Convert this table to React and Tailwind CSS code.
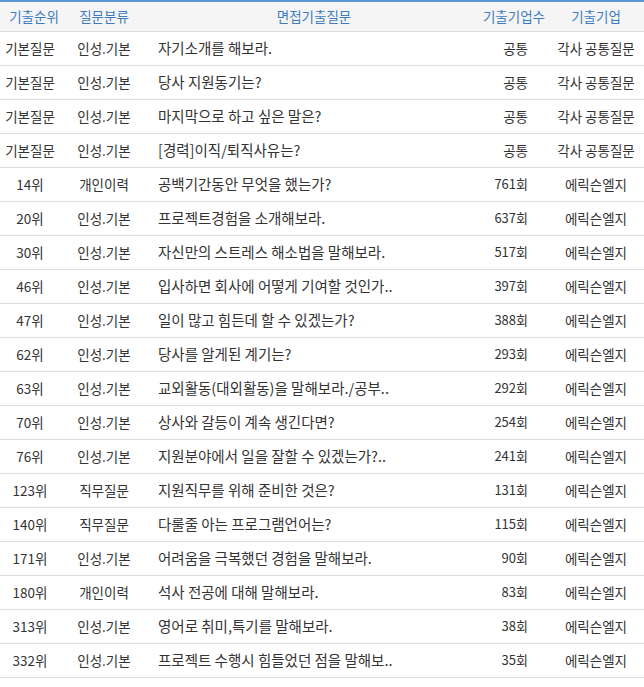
import React from "react";

const rows = [
  ["기본질문", "인성.기본", "자기소개를 해보라.", "공통", "각사 공통질문"],
  ["기본질문", "인성.기본", "당사 지원동기는?", "공통", "각사 공통질문"],
  ["기본질문", "인성.기본", "마지막으로 하고 싶은 말은?", "공통", "각사 공통질문"],
  ["기본질문", "인성.기본", "[경력]이직/퇴직사유는?", "공통", "각사 공통질문"],
  ["14위", "개인이력", "공백기간동안 무엇을 했는가?", "761회", "에릭슨엘지"],
  ["20위", "인성.기본", "프로젝트경험을 소개해보라.", "637회", "에릭슨엘지"],
  ["30위", "인성.기본", "자신만의 스트레스 해소법을 말해보라.", "517회", "에릭슨엘지"],
  ["46위", "인성.기본", "입사하면 회사에 어떻게 기여할 것인가..", "397회", "에릭슨엘지"],
  ["47위", "인성.기본", "일이 많고 힘든데 할 수 있겠는가?", "388회", "에릭슨엘지"],
  ["62위", "인성.기본", "당사를 알게된 계기는?", "293회", "에릭슨엘지"],
  ["63위", "인성.기본", "교외활동(대외활동)을 말해보라./공부..", "292회", "에릭슨엘지"],
  ["70위", "인성.기본", "상사와 갈등이 계속 생긴다면?", "254회", "에릭슨엘지"],
  ["76위", "인성.기본", "지원분야에서 일을 잘할 수 있겠는가?..", "241회", "에릭슨엘지"],
  ["123위", "직무질문", "지원직무를 위해 준비한 것은?", "131회", "에릭슨엘지"],
  ["140위", "직무질문", "다룰줄 아는 프로그램언어는?", "115회", "에릭슨엘지"],
  ["171위", "인성.기본", "어려움을 극복했던 경험을 말해보라.", "90회", "에릭슨엘지"],
  ["180위", "개인이력", "석사 전공에 대해 말해보라.", "83회", "에릭슨엘지"],
  ["313위", "인성.기본", "영어로 취미,특기를 말해보라.", "38회", "에릭슨엘지"],
  ["332위", "인성.기본", "프로젝트 수행시 힘들었던 점을 말해보..", "35회", "에릭슨엘지"],
];

export default function App() {
  return (
    <div
      className="w-[644px] h-[687px] bg-white text-[13.5px] text-[#333]"
      style={{ fontFamily: '"Noto Sans CJK KR", "Noto Sans", sans-serif' }}
    >
      <table className="w-[644px] table-fixed border-collapse">
        <colgroup>
          <col className="w-[60px]" />
          <col className="w-[88px]" />
          <col className="w-[332px]" />
          <col className="w-[68px]" />
          <col className="w-[96px]" />
        </colgroup>
        <thead>
          <tr className="h-[30px] bg-[#f5f5f5] border-t-2 border-t-[#5b95d0] border-b border-b-[#dcdcdc] text-[#3d7cc0]">
            <th className="font-normal text-center pl-[8px]">기출순위</th>
            <th className="font-normal text-center">질문분류</th>
            <th className="font-normal text-center">면접기출질문</th>
            <th className="font-normal text-center">기출기업수</th>
            <th className="font-normal text-center">기출기업</th>
          </tr>
        </thead>
        <tbody>
          {rows.map((r, i) => (
            <tr key={i} className="h-[34px] border-b border-b-[#dcdcdc]">
              <td className="text-center whitespace-nowrap">{r[0]}</td>
              <td className="text-center whitespace-nowrap">{r[1]}</td>
              <td className="pl-[10px] text-[14.5px] whitespace-nowrap overflow-hidden">{r[2]}</td>
              <td
                className={
                  r[3] === "공통"
                    ? "text-right pr-[20px] whitespace-nowrap"
                    : "text-right pr-[20px] text-[13px] whitespace-nowrap"
                }
              >
                {r[3]}
              </td>
              <td className="text-center whitespace-nowrap">{r[4]}</td>
            </tr>
          ))}
        </tbody>
      </table>
    </div>
  );
}
